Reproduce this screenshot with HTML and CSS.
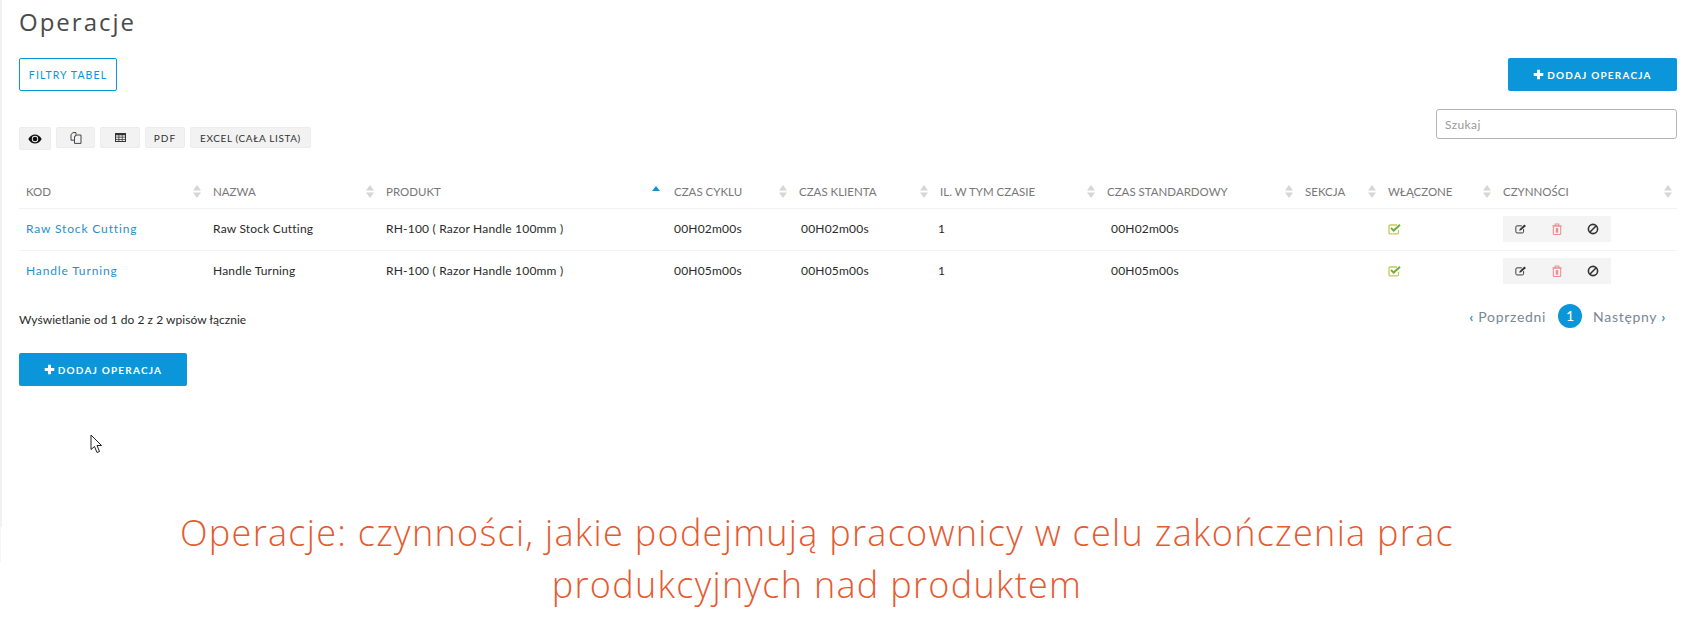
FILE: index.html
```html
<!DOCTYPE html>
<html lang="pl">
<head>
<meta charset="utf-8">
<title>Operacje</title>
<link rel="stylesheet" href="styles.css">
</head>
<body>
<svg class="defs" width="0" height="0" aria-hidden="true">
  <symbol id="i-plus" viewBox="0 0 12 12"><path d="M4.400 0.800h3.200v3.600h3.600v3.200H7.600v3.600H4.400V7.600H0.800V4.400h3.600z" fill="currentColor"/></symbol>
  <symbol id="i-sort" viewBox="0 0 8 13"><path d="M4 0L8 5.600H0z M4 13L0 7.400h8z" fill="#d6d6d6"/></symbol>
  <symbol id="i-edit" viewBox="0 0 14 12"><path d="M10 6.200v3.100c0 .8-.6 1.300-1.300 1.300H2.300c-.7 0-1.300-.5-1.300-1.300V3.600c0-.8.600-1.300 1.300-1.300H8" fill="none" stroke="currentColor" stroke-width="1.100"/><path d="M5 8l.5-2L11 .8l1.800 1.800L7 7.600z" fill="currentColor"/></symbol>
  <symbol id="i-trash" viewBox="0 0 12 13"><path d="M2 3.500h8v8c0 .6-.4 1-1 1H3c-.6 0-1-.4-1-1z M1 3h10 M4 3V1.200h4V3" fill="none" stroke="currentColor" stroke-width="1.100"/><path d="M4.700 5.500h2.600v5H4.700z" fill="currentColor"/></symbol>
  <symbol id="i-ban" viewBox="0 0 12 12"><circle cx="6" cy="6" r="4.600" fill="none" stroke="currentColor" stroke-width="1.600"/><path d="M2.800 9.200l6.400-6.400" stroke="currentColor" stroke-width="1.600"/></symbol>
  <symbol id="i-check" viewBox="0 0 13 12"><path d="M10.500 7v2.600c0 .7-.5 1.200-1.200 1.200H2.200C1.500 10.800 1 10.300 1 9.600V3.200C1 2.500 1.500 2 2.200 2H9" fill="none" stroke="#c5c95a" stroke-width="1.300"/><path d="M3 5l2.700 2.600L12 1.800" fill="none" stroke="#6fae3c" stroke-width="2"/></symbol>
</svg>

<main class="page">
  <h1 class="title">Operacje</h1>

  <div class="top-row">
    <button class="btn btn-outline">FILTRY TABEL</button>
    <button class="btn btn-primary"><svg class="ico-plus"><use href="#i-plus"/></svg>DODAJ OPERACJA</button>
  </div>

  <div class="tool-row">
    <div class="tools">
      <button class="tool tool-eye" aria-label="Kolumny">
        <svg width="14" height="10" viewBox="0 0 14 10"><path d="M0.300 5C2 2 4.300 0.500 7 0.500S12 2 13.700 5C12 8 9.700 9.500 7 9.500S2 8 0.300 5z" fill="#111"/><circle cx="7" cy="5" r="3.200" fill="#f2f2f2"/><circle cx="7" cy="5" r="2.300" fill="#111"/></svg>
      </button>
      <button class="tool tool-copy" aria-label="Kopiuj">
        <svg width="12" height="12" viewBox="0 0 12 12"><path d="M1 2.500L3 .6h3v2.200L4.500 4.500v3.700H1z" fill="none" stroke="#444" stroke-width="1"/><path d="M4.500 5L6.500 3h4.500v8.400H4.500z" fill="#f2f2f2" stroke="#445" stroke-width="1"/></svg>
      </button>
      <button class="tool tool-table" aria-label="CSV">
        <svg width="11" height="9" viewBox="0 0 11 9"><path d="M0 0h11v9H0z" fill="#333"/><path d="M1 2.300h2.500v1.400H1zM4.300 2.300h2.500v1.400H4.300zM7.500 2.300H10v1.400H7.500zM1 4.500h2.500v1.400H1zM4.300 4.500h2.500v1.400H4.300zM7.500 4.500H10v1.400H7.500zM1 6.700h2.500V8H1zM4.300 6.700h2.500V8H4.300zM7.500 6.700H10V8H7.500z" fill="#eee"/></svg>
      </button>
      <button class="tool tool-pdf">PDF</button>
      <button class="tool tool-excel">EXCEL (CAŁA LISTA)</button>
    </div>
    <input class="search" type="text" placeholder="Szukaj">
  </div>

  <table class="grid">
    <colgroup>
      <col class="c1"><col class="c2"><col class="c3"><col class="c4"><col class="c5">
      <col class="c6"><col class="c7"><col class="c8"><col class="c9"><col class="c10">
    </colgroup>
    <thead>
      <tr>
        <th><span class="th-in">KOD<svg class="sort"><use href="#i-sort"/></svg></span></th>
        <th><span class="th-in">NAZWA<svg class="sort"><use href="#i-sort"/></svg></span></th>
        <th><span class="th-in">PRODUKT<svg class="sort-asc" viewBox="0 0 8 5"><path d="M4 0l4 5H0z" fill="#0a96d9"/></svg></span></th>
        <th><span class="th-in">CZAS CYKLU<svg class="sort"><use href="#i-sort"/></svg></span></th>
        <th><span class="th-in">CZAS KLIENTA<svg class="sort"><use href="#i-sort"/></svg></span></th>
        <th><span class="th-in">IL. W TYM CZASIE<svg class="sort"><use href="#i-sort"/></svg></span></th>
        <th><span class="th-in">CZAS STANDARDOWY<svg class="sort"><use href="#i-sort"/></svg></span></th>
        <th><span class="th-in">SEKCJA<svg class="sort"><use href="#i-sort"/></svg></span></th>
        <th><span class="th-in">WŁĄCZONE<svg class="sort"><use href="#i-sort"/></svg></span></th>
        <th><span class="th-in">CZYNNOŚCI<svg class="sort"><use href="#i-sort"/></svg></span></th>
      </tr>
    </thead>
    <tbody>
      <tr>
        <td><a class="code" href="#">Raw Stock Cutting</a></td>
        <td>Raw Stock Cutting</td>
        <td>RH-100 ( Razor Handle 100mm )</td>
        <td class="p-a">00H02m00s</td>
        <td class="p-b">00H02m00s</td>
        <td class="p-c">1</td>
        <td class="p-d">00H02m00s</td>
        <td></td>
        <td class="t-ico"><svg class="check"><use href="#i-check"/></svg></td>
        <td class="t-ico"><div class="actions"><svg class="act"><use href="#i-edit"/></svg><svg class="act act-del"><use href="#i-trash"/></svg><svg class="act"><use href="#i-ban"/></svg></div></td>
      </tr>
      <tr>
        <td><a class="code" href="#">Handle Turning</a></td>
        <td>Handle Turning</td>
        <td>RH-100 ( Razor Handle 100mm )</td>
        <td class="p-a">00H05m00s</td>
        <td class="p-b">00H05m00s</td>
        <td class="p-c">1</td>
        <td class="p-d">00H05m00s</td>
        <td></td>
        <td class="t-ico"><svg class="check"><use href="#i-check"/></svg></td>
        <td class="t-ico"><div class="actions"><svg class="act"><use href="#i-edit"/></svg><svg class="act act-del"><use href="#i-trash"/></svg><svg class="act"><use href="#i-ban"/></svg></div></td>
      </tr>
    </tbody>
  </table>

  <div class="foot-row">
    <p class="info">Wyświetlanie od 1 do 2 z 2 wpisów łącznie</p>
    <nav class="pager">
      <a class="pg" href="#"><span class="chev">‹</span> Poprzedni</a>
      <span class="pg-current">1</span>
      <a class="pg" href="#">Następny <span class="chev">›</span></a>
    </nav>
  </div>

  <button class="btn btn-primary btn-bottom"><svg class="ico-plus"><use href="#i-plus"/></svg>DODAJ OPERACJA</button>
</main>

<svg class="cursor" width="14" height="20" viewBox="0 0 14 20"><path d="M1 1v14.500l3.500-3 2.500 6 2.500-1-2.500-6h4.500z" fill="#fff" stroke="#222" stroke-width="1"/></svg>

<p class="caption">Operacje: czynności, jakie podejmują pracownicy w celu zakończenia prac produkcyjnych nad produktem</p>
</body>
</html>
```

FILE: styles.css
```css
* { box-sizing: border-box; }
html, body { margin: 0; padding: 0; }
body {
  width: 1695px;
  height: 625px;
  overflow: hidden;
  background: #fff;
  font-family: "Lato", "Noto Sans", sans-serif;
  font-size: 12px;
  color: #2a2a2a;
  position: relative;
}
.defs { position: absolute; }

.page {
  position: relative;
  height: 527px;
  border-left: 2px solid #f1f1f1;
  padding: 0 18px 0 17px;
}
.page::after {
  content: "";
  position: absolute;
  left: -2px;
  top: 527px;
  width: 1px;
  height: 35px;
  background: #f5f5f5;
}

.title {
  margin: 0;
  padding-top: 5px;
  height: 58px;
  font-family: "Open Sans", sans-serif;
  font-weight: 400;
  font-size: 24px;
  line-height: 33px;
  letter-spacing: 2px;
  color: #4a4a4a;
}

.btn {
  height: 33px;
  border-radius: 2px;
  font-family: "Lato", sans-serif;
  font-size: 10px;
  font-weight: 700;
  letter-spacing: 1.200px;
  padding: 0;
  display: inline-flex;
  align-items: center;
  justify-content: center;
}
.btn-outline {
  width: 98px;
  background: #fff;
  border: 1px solid #0a96d9;
  color: #0a96d9;
  font-weight: 400;
  font-size: 10.500px;
  letter-spacing: 1.100px;
}
.btn-primary {
  width: 169px;
  background: #0a96d9;
  border: 0;
  color: #fff;
}
.btn-bottom { width: 168px; margin-top: 14px; }
.ico-plus { width: 11px; height: 11px; margin-right: 3px; }

.top-row {
  display: flex;
  justify-content: space-between;
}

.tool-row {
  display: flex;
  justify-content: space-between;
  align-items: flex-start;
  margin-top: 18px;
  height: 60px;
}
.tools {
  display: flex;
  align-items: flex-start;
  gap: 5px;
  margin-top: 18px;
}
.tool {
  height: 21px;
  padding: 0;
  background: #f2f2f2;
  border: 1px solid #ececec;
  border-radius: 2px;
  font-family: "Lato", sans-serif;
  font-size: 10px;
  letter-spacing: .8px;
  color: #333;
  display: inline-flex;
  align-items: center;
  justify-content: center;
}
.tool-eye { width: 32px; height: 23px; }
.tool-copy { width: 39px; }
.tool-table { width: 40px; }
.tool-pdf { width: 40px; letter-spacing: 1px; }
.tool-excel { width: 121px; letter-spacing: .6px; }

.search {
  width: 241px;
  height: 30px;
  border: 1px solid #b5b5b5;
  border-radius: 3px;
  padding: 0 8px;
  font-family: "Lato", sans-serif;
  font-size: 12px;
  letter-spacing: .4px;
  outline: none;
}
.search::placeholder { color: #999; opacity: 1; }

.grid {
  width: 1658px;
  table-layout: fixed;
  border-collapse: collapse;
}
.c1 { width: 187px; }
.c2 { width: 173px; }
.c3 { width: 288px; }
.c4 { width: 125px; }
.c5 { width: 141px; }
.c6 { width: 167px; }
.c7 { width: 198px; }
.c8 { width: 83px; }
.c9 { width: 115px; }
.c10 { width: 181px; }

.grid th {
  height: 39px;
  padding: 6px 5px 0 7px;
  border-bottom: 1px solid #f2f2f2;
  text-align: left;
  font-weight: 400;
  font-size: 11.500px;
  color: #777;
  white-space: nowrap;
}
.th-in {
  display: flex;
  justify-content: space-between;
  align-items: center;
}
.sort { width: 8px; height: 13px; flex: none; }
.sort-asc { width: 8px; height: 5px; flex: none; align-self: flex-start; margin-top: 1px; margin-right: 2px; }

.grid td {
  height: 42px;
  padding: 0 0 2px 7px;
  border-bottom: 1px solid #f4f4f4;
  font-size: 12px;
  letter-spacing: .2px;
  color: #2a2a2a;
  white-space: nowrap;
}
.grid tbody tr:last-child td { border-bottom: 0; }
.grid .p-a { padding-left: 7px; }
.grid .p-b { padding-left: 9px; }
.grid .p-c { padding-left: 5px; }
.grid .p-d { padding-left: 11px; }
.grid .t-ico { padding-bottom: 1px; }

.code {
  color: #1f8fd0;
  font-weight: 400;
  letter-spacing: .85px;
  text-decoration: none;
}
.check { width: 13px; height: 12px; display: block; }

.actions {
  width: 108px;
  height: 26px;
  background: #f4f4f4;
  display: flex;
  align-items: center;
  justify-content: center;
  gap: 24px;
}
.act { width: 12px; height: 12px; color: #333; }
.act-del { color: #ef8a90; }

.foot-row {
  display: flex;
  justify-content: space-between;
  margin-top: 12px;
  height: 35px;
}
.info {
  margin: 7px 0 0;
  font-size: 12px;
  line-height: 18px;
  letter-spacing: .05px;
  color: #2a2a2a;
}
.pager {
  display: flex;
  align-items: center;
  height: 24px;
  margin-right: 11px;
  font-size: 14px;
  letter-spacing: .7px;
}
.pg { color: #7a8794; text-decoration: none; }
.chev { color: #1f8fd0; font-weight: 700; }
.pg-current {
  width: 24px;
  height: 24px;
  margin: 0 11px 0 12px;
  border-radius: 50%;
  background: #0a96d9;
  color: #fff;
  text-align: center;
  line-height: 24px;
  letter-spacing: 0;
}

.cursor { position: absolute; left: 90px; top: 434px; }

.caption {
  width: 1330px;
  margin: -20px 0 0 152px;
  text-align: center;
  font-family: "Open Sans", sans-serif;
  font-weight: 300;
  font-size: 36px;
  line-height: 52px;
  letter-spacing: 1.300px;
  color: #e65a30;
}
```
